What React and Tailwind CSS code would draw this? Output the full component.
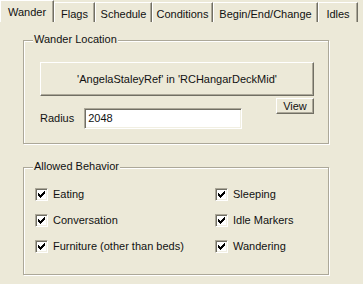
import React from "react";

const tabs = [
  { label: "Wander", w: 54, sel: true },
  { label: "Flags", w: 41 },
  { label: "Schedule", w: 57 },
  { label: "Conditions", w: 61 },
  { label: "Begin/End/Change", w: 105 },
  { label: "Idles", w: 40 },
];

function Check({ label }) {
  return (
    <div className="flex items-center h-[13px]">
      <div className="w-[13px] h-[13px] bg-white border border-t-[#ACA899] border-l-[#ACA899] border-b-white border-r-white shadow-[inset_1px_1px_0_#716F64,inset_-1px_-1px_0_#F1EFE2] flex items-center justify-center shrink-0">
        <svg width="7" height="7" viewBox="0 0 7 7">
          <path d="M0 2h1v1h1v1h1v-1h1v-1h1v-1h1v-1h1v3h-1v1h-1v1h-1v1h-1v1h-1v-1h-1v-1h-1v-1h-1z" fill="#000" />
        </svg>
      </div>
      <span className="ml-[5px] leading-none">{label}</span>
    </div>
  );
}

export default function App() {
  return (
    <div className="w-[363px] h-[284px] bg-[#ECE9D8] font-['Liberation_Sans',Arial,sans-serif] text-[11px] text-[#111] overflow-hidden">
      <div className="flex items-end h-[22px]">
        {tabs.map((t) => (
          <div
            key={t.label}
            style={{ width: t.w }}
            className={
              "flex items-center justify-center border-t border-l border-t-white border-l-white border-r border-r-[#716F64] shadow-[inset_-1px_0_0_#ACA899] " +
              (t.sel ? "h-[22px] pt-[2px]" : "h-[20px] pt-[3px]")
            }
          >
            <span className="leading-none">{t.label}</span>
          </div>
        ))}
      </div>

      <div className="pl-[23px] pt-[18px]">
        {/* Wander Location */}
        <div className="relative w-[306px] h-[104px] border border-[#ACA899] shadow-[1px_1px_0_white,inset_1px_1px_0_white] pl-[16px] pr-[14px] pt-[21px]">
          <span className="absolute left-[9px] top-[-7px] px-[1px] bg-[#ECE9D8] leading-none">
            Wander Location
          </span>
          <div className="h-[34px] flex items-center justify-center border border-t-white border-l-white border-b-[#716F64] border-r-[#716F64] shadow-[inset_-1px_-1px_0_#ACA899]">
            <span className="leading-none">'AngelaStaleyRef' in 'RCHangarDeckMid'</span>
          </div>
          <div className="flex justify-between items-start">
            <div className="flex items-center mt-[12px]">
              <span className="leading-none">Radius</span>
              <div className="ml-[10px] w-[158px] h-[21px] bg-white border border-t-[#ACA899] border-l-[#ACA899] border-b-white border-r-white shadow-[inset_1px_1px_0_#716F64,inset_-1px_-1px_0_#F1EFE2] flex items-center pl-[3px]">
                <span className="leading-none">2048</span>
              </div>
            </div>
            <div className="mt-[2px] w-[38px] h-[16px] flex items-center justify-center border border-t-white border-l-white border-b-[#716F64] border-r-[#716F64] shadow-[inset_-1px_-1px_0_#ACA899]">
              <span className="leading-none">View</span>
            </div>
          </div>
        </div>

        {/* Allowed Behavior */}
        <div className="relative mt-[23px] w-[306px] h-[108px] border border-[#ACA899] shadow-[1px_1px_0_white,inset_1px_1px_0_white] pl-[11px] pt-[20px]">
          <span className="absolute left-[9px] top-[-7px] px-[1px] bg-[#ECE9D8] leading-none">
            Allowed Behavior
          </span>
          <div className="grid grid-cols-[180px_1fr] gap-y-[13px]">
            <Check label="Eating" />
            <Check label="Sleeping" />
            <Check label="Conversation" />
            <Check label="Idle Markers" />
            <Check label="Furniture (other than beds)" />
            <Check label="Wandering" />
          </div>
        </div>
      </div>
    </div>
  );
}
